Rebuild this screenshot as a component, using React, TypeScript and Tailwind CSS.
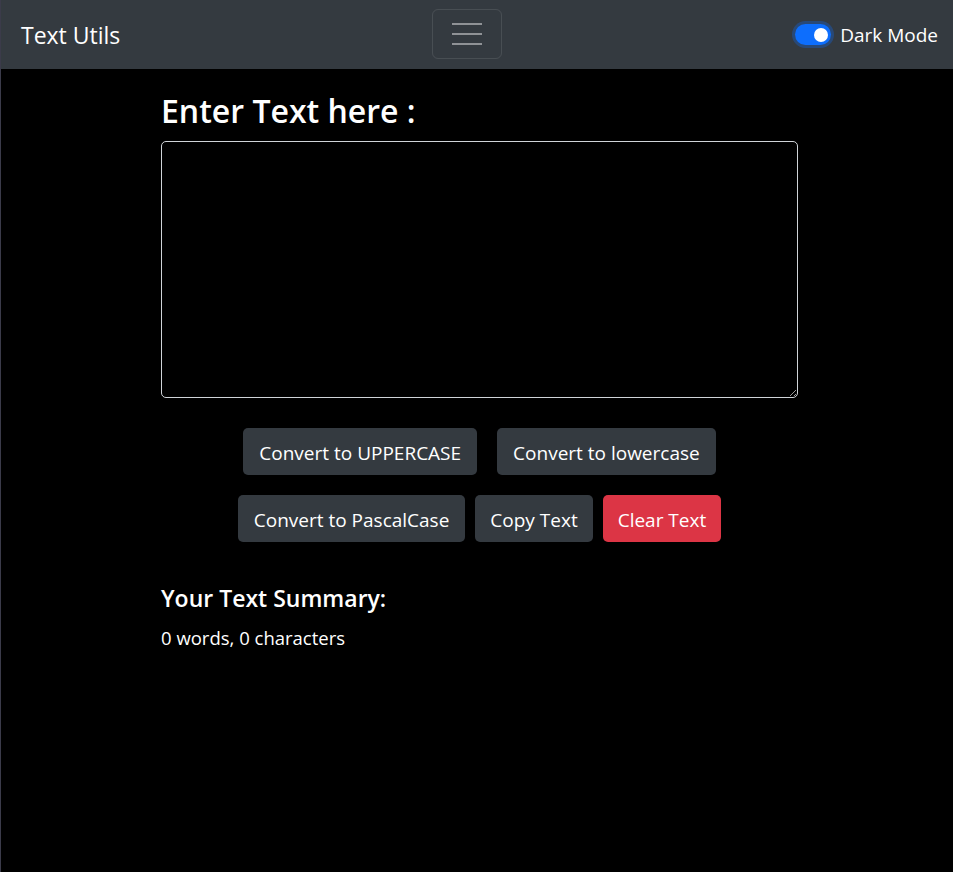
import React, { useState } from 'react'

const font = { fontFamily: '"Open Sans", "Noto Sans", sans-serif' }

export default function App() {
  const [text, setText] = useState('')
  const words = text.split(/\s+/).filter((w) => w.length > 0).length

  return (
    <div className="min-h-[872px] bg-black text-white border-l border-[#3b3b4a]" style={font}>
      <nav className="h-[69px] bg-[#343a40] flex items-center justify-between pl-[20px] pr-[15px] relative">
        <span className="text-[23px] text-white pt-[2px]">Text Utils</span>
        <button className="absolute left-[431px] top-[9px] w-[70px] h-[50px] rounded-[6px] border border-white/10 flex items-center justify-center">
          <svg width="30" height="22" viewBox="0 0 30 22">
            <path d="M0 1h30M0 11h30M0 21h30" stroke="#8f9296" strokeWidth="2.2" />
          </svg>
        </button>
        <label className="flex items-center gap-[9px] cursor-pointer">
          <span className="w-[36px] h-[21px] rounded-full bg-[#0d6efd] ring-[3px] ring-[#0d6efd]/30 flex items-center justify-end pr-[3px]">
            <span className="w-[14px] h-[14px] rounded-full bg-white" />
          </span>
          <span className="text-[19px] pt-[2px]">Dark Mode</span>
        </label>
      </nav>

      <div className="ml-[160px] w-[637px] pt-[22px]">
        <h1 className="text-[32px] font-semibold leading-[40px] mb-[10px]">Enter Text here :</h1>
        <textarea
          value={text}
          onChange={(e) => setText(e.target.value)}
          className="block w-full h-[257px] bg-black border border-[#d0d4d8] rounded-[5px] outline-none text-white p-2"
        />
        <div className="flex justify-center gap-[20px] mt-[30px]">
          <button className="h-[47px] px-[16px] pt-[3px] rounded-[5px] bg-[#343a40] text-[19px]">Convert to UPPERCASE</button>
          <button className="h-[47px] px-[16px] pt-[3px] rounded-[5px] bg-[#343a40] text-[19px]">Convert to lowercase</button>
        </div>
        <div className="flex justify-center gap-[10px] mt-[20px]">
          <button className="h-[47px] px-[16px] pt-[3px] rounded-[5px] bg-[#343a40] text-[19px]">Convert to PascalCase</button>
          <button className="h-[47px] px-[15px] pt-[3px] rounded-[5px] bg-[#343a40] text-[19px]">Copy Text</button>
          <button className="h-[47px] px-[15px] pt-[3px] rounded-[5px] bg-[#dc3545] text-[19px]">Clear Text</button>
        </div>
        <h2 className="mt-[42px] text-[23px] font-semibold leading-[29px]">Your Text Summary:</h2>
        <p className="mt-[11px] text-[18.5px] leading-[27px]">
          {words} words, {text.length} characters
        </p>
      </div>
    </div>
  )
}
